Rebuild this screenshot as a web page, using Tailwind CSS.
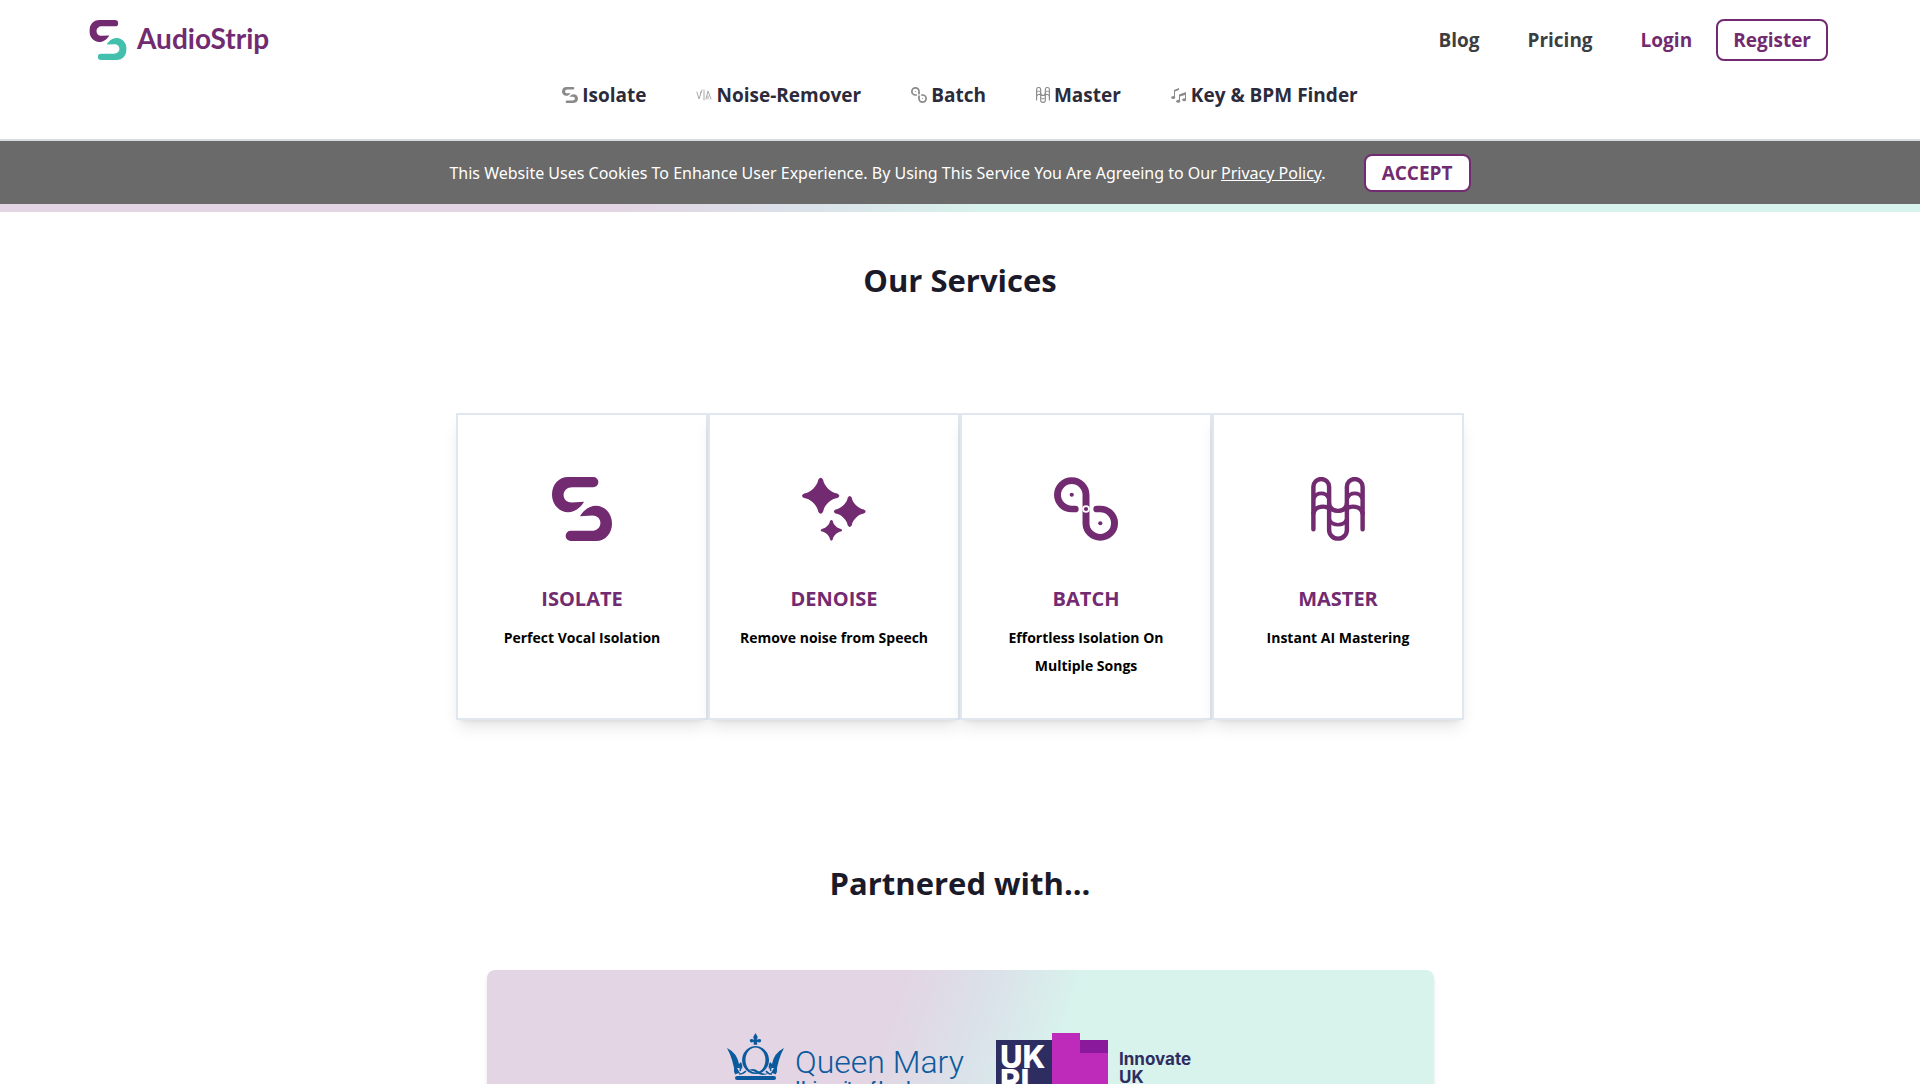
<!DOCTYPE html>
<html lang="en">
<head>
    <meta charset="UTF-8">
    <meta name="viewport" content="width=device-width, initial-scale=1.0">
    <title>AudioStrip</title>
    <!-- Tailwind CSS CDN -->
    <script src="https://cdn.jsdelivr.net/npm/@tailwindcss/browser@4"></script>
</head>
<body class="bg-white font-['Open_Sans','Noto_Sans',sans-serif] text-[#1a1a2a] overflow-x-hidden">

    <!-- Shared icon shapes -->
    <svg class="hidden" aria-hidden="true">
        <symbol id="strip-half" viewBox="0 0 176 189" preserveAspectRatio="none">
            <path d="M47 0H121a15 15 0 0 1 0 30H60C44 30 34 40 34 53C34 66 44 75 58 75L94 73C86 88 68 104 47 104C20 104 0 80 0 52C0 22 20 0 47 0Z"/>
        </symbol>
        <symbol id="icon-isolate" viewBox="0 0 176 189" preserveAspectRatio="none">
            <use href="#strip-half" width="176" height="189"/>
            <use href="#strip-half" width="176" height="189" transform="rotate(180 88 94.5)"/>
        </symbol>
        <symbol id="icon-batch" viewBox="0 0 184 190" preserveAspectRatio="none">
            <path d="M61 95H51A41 42 0 1 1 92 53V137A41 42 0 1 0 133 95H123" fill="none" stroke="currentColor" stroke-width="20" stroke-linecap="round"/>
            <circle cx="51" cy="53" r="6"/>
            <circle cx="133" cy="137" r="6"/>
            <circle cx="92" cy="95" r="11" fill="white"/>
            <circle cx="92" cy="95" r="6"/>
        </symbol>
        <symbol id="icon-master" viewBox="0 0 158 190" preserveAspectRatio="none">
            <g fill="none" stroke="currentColor" stroke-width="13" stroke-linecap="round">
                <path d="M7 155V29a23 23 0 0 1 46 0V157a26 26 0 0 0 52 0V29a23 23 0 0 1 46 0V155"/>
                <path d="M7 108C12 84 42 85 55 94Q79 107 103 94C116 85 146 84 151 108"/>
                <path d="M53 74a26 27 0 0 0 52 0M55 129C64 146 94 146 103 129M9 62C16 44 44 44 51 62M107 62C114 44 142 44 149 62" stroke-width="11"/>
            </g>
        </symbol>
        <symbol id="star" viewBox="-54 -54 108 108" overflow="visible">
            <path d="M-7 -48Q0 -60 7 -48C9 -30 30 -9 48 -7Q60 0 48 7C30 9 9 30 7 48Q0 60 -7 48C-9 30 -30 9 -48 7Q-60 0 -48 -7C-30 -9 -9 -30 -7 -48Z"/>
        </symbol>
    </svg>

    <header class="border-b-2 border-[#d5dde3]">
        <div class="flex items-center justify-between pl-[89px] pr-[92px] pt-[19px]">
            <a href="#" class="flex items-center gap-[10px] text-[#722b70]">
                <svg class="w-[38px] h-10" viewBox="0 0 176 189" fill="currentColor" aria-hidden="true">
                    <use href="#strip-half" width="176" height="189"/>
                    <use href="#strip-half" width="176" height="189" transform="rotate(180 88 94.5)" fill="#43bfae"/>
                </svg>
                <span class="pb-1 font-['Lato',sans-serif] font-bold text-[28px] leading-8">AudioStrip</span>
            </a>
            <nav class="flex items-center text-[19px] leading-6 font-bold text-[#3b3f42]">
                <a href="#" class="mr-12">Blog</a>
                <a href="#" class="mr-12">Pricing</a>
                <a href="#" class="mr-6 text-[#722b70]">Login</a>
                <a href="#" class="px-[15px] py-[7px] border-2 border-[#722b70] rounded-lg text-[#722b70]">Register</a>
            </nav>
        </div>

        <nav class="flex justify-center gap-[50px] pt-[22px] pb-8 text-[19px] leading-6 font-bold text-[#2b2b3b]">
            <a href="#" class="flex items-center gap-1">
                <svg class="w-4 h-4 text-[#8a8a8a]" fill="currentColor" aria-hidden="true"><use href="#icon-isolate"/></svg>
                Isolate
            </a>
            <a href="#" class="flex items-center gap-1">
                <svg class="w-4 h-4 text-[#aaaaaa]" viewBox="0 0 16 16" fill="none" stroke="currentColor" stroke-linecap="round" stroke-linejoin="round" aria-hidden="true">
                    <path d="M1 5l2 7 3-9M4.500 5v3M8 3v10M10 12l2-8 3 8M12 9v3"/>
                </svg>
                Noise-Remover
            </a>
            <a href="#" class="flex items-center gap-1">
                <svg class="w-4 h-4 text-[#8a8a8a]" fill="currentColor" aria-hidden="true"><use href="#icon-batch"/></svg>
                Batch
            </a>
            <a href="#" class="flex items-center gap-1">
                <svg class="w-[14px] h-4 text-[#8a8a8a]" fill="currentColor" aria-hidden="true"><use href="#icon-master"/></svg>
                Master
            </a>
            <a href="#" class="flex items-center gap-1">
                <svg class="w-4 h-4 text-[#8a8a8a]" viewBox="0 0 16 16" fill="currentColor" aria-hidden="true">
                    <path d="M3 10V3l5-2v2L4 4.500V10zM8 14V7.500L15 5v7.500h-1V8L9 9.500V14z"/>
                    <ellipse cx="2.200" cy="10.500" rx="2" ry="1.500"/>
                    <ellipse cx="7.200" cy="14.300" rx="2" ry="1.500"/>
                    <ellipse cx="13.200" cy="12.800" rx="2" ry="1.500"/>
                </svg>
                Key &amp; BPM Finder
            </a>
        </nav>
    </header>

    <!-- Cookie notice -->
    <div class="flex items-center justify-center gap-[38px] min-h-[63px] py-3 bg-[#6a6a6a] text-white">
        <p class="font-['Noto_Sans',sans-serif] text-base leading-6">This Website Uses Cookies To Enhance User Experience. By Using This Service You Are Agreeing to Our <a href="#" class="underline">Privacy Policy</a>.</p>
        <button type="button" class="px-4 py-[5px] bg-white border-2 border-[#722b70] rounded-lg text-[19px] leading-6 font-bold text-[#722b70]">ACCEPT</button>
    </div>
    <div class="h-2 bg-[linear-gradient(109deg,#e3d5e3_32%,#dbe0e9_41%,#d8f2ec_51%)]"></div>

    <main>
        <section class="pt-12">
            <h2 class="text-center text-[31px] leading-10 font-bold">Our Services</h2>
            <div class="grid grid-cols-4 max-w-[1008px] mx-auto mt-[113px] text-center font-bold">
                <a href="#" class="flex flex-col items-center min-h-[307px] pt-[62px] px-6 bg-white border-2 border-[#e0e7ef] shadow-lg">
                    <svg class="w-[60px] h-16 text-[#722b70]" fill="currentColor" aria-hidden="true"><use href="#icon-isolate"/></svg>
                    <h3 class="mt-11 text-xl leading-7 text-[#722b70]">ISOLATE</h3>
                    <p class="mt-[11px] text-sm leading-7 text-black">Perfect Vocal Isolation</p>
                </a>
                <a href="#" class="flex flex-col items-center min-h-[307px] pt-[62px] px-6 bg-white border-2 border-[#e0e7ef] shadow-lg">
                    <svg class="w-16 h-16 text-[#722b70]" viewBox="0 0 185 191" preserveAspectRatio="none" fill="currentColor" aria-hidden="true">
                        <use href="#star" width="108" height="108" x="0" y="2"/>
                        <use href="#star" width="92" height="92" x="92" y="57"/>
                        <use href="#star" width="62" height="62" x="54" y="128"/>
                    </svg>
                    <h3 class="mt-11 text-xl leading-7 text-[#722b70]">DENOISE</h3>
                    <p class="mt-[11px] text-sm leading-7 text-black">Remove noise from Speech</p>
                </a>
                <a href="#" class="flex flex-col items-center min-h-[307px] pt-[62px] px-6 bg-white border-2 border-[#e0e7ef] shadow-lg">
                    <svg class="w-16 h-16 text-[#722b70]" fill="currentColor" aria-hidden="true"><use href="#icon-batch"/></svg>
                    <h3 class="mt-11 text-xl leading-7 text-[#722b70]">BATCH</h3>
                    <p class="mt-[11px] text-sm leading-7 text-black">Effortless Isolation On<br>Multiple Songs</p>
                </a>
                <a href="#" class="flex flex-col items-center min-h-[307px] pt-[62px] px-6 bg-white border-2 border-[#e0e7ef] shadow-lg">
                    <svg class="w-[54px] h-16 text-[#722b70]" fill="currentColor" aria-hidden="true"><use href="#icon-master"/></svg>
                    <h3 class="mt-11 text-xl leading-7 text-[#722b70]">MASTER</h3>
                    <p class="mt-[11px] text-sm leading-7 text-black">Instant AI Mastering</p>
                </a>
            </div>
        </section>

        <section class="pt-[143px]">
            <h2 class="text-center text-[31px] leading-10 font-bold">Partnered with...</h2>
            <div class="flex justify-center items-start gap-8 max-w-[947px] mx-auto mt-[67px] pt-[63px] pb-16 rounded-lg shadow-md bg-[linear-gradient(109deg,#e3d5e3_395px,#dbe0e9_475px,#d8f2ec_565px)]">
                <!-- Queen Mary -->
                <svg class="w-[237px] h-[66px]" viewBox="0 0 237 66" fill="#0b5a9d" role="img" aria-label="Queen Mary University of London">
                    <path d="M28.500 0q1.500 2.500 2.200 4q-.5 2-1 3q3-2 4.500 0q0 2.500-2 2.500l-2-.8v3h-3.500v-3l-2 .8q-2 0-2-2.500q1.500-2 4.500 0q-.5-1-1-3z"/>
                    <path d="M28.500 13a13.500 14 0 1 0 .1 0zM28.500 14.500a10 12.500 0 1 1-.1 0z" fill-rule="evenodd"/>
                    <path d="M20 38Q26 34 31 38T42 40Q36 44 30 40T20 38z"/>
                    <path d="M0 15Q10 20 12 31l2-2q2 4 1 7q-3-4-5-1l3 5l-5 1Q6 26 0 15zM57 15Q47 20 45 31l-2-2q-2 4-1 7q3-4 5-1l-3 5l5 1Q51 26 57 15z"/>
                    <path d="M9 41Q6 36 10 34Q15 34 13 38M12 41Q16 41 19 38M48 41Q51 36 47 34Q42 34 44 38M45 41Q41 41 39 38" fill="none" stroke="#0b5a9d" stroke-width="1.500"/>
                    <rect x="8" y="43" width="41" height="4" rx="2"/>
                    <text x="68" y="40" font-family="Roboto" font-size="32" font-weight="300">Queen Mary</text>
                    <text x="69" y="59" font-family="Roboto" font-size="14" font-weight="700">University of London</text>
                </svg>
                <!-- UKRI / Innovate UK -->
                <svg class="w-[197px] h-[82px]" viewBox="0 0 197 82" role="img" aria-label="UKRI Innovate UK">
                    <rect y="7" width="57" height="75" fill="#2e2d62"/>
                    <path d="M56 0H84V20H112V82H56z" fill="#be2bbb"/>
                    <path d="M84 7H112V20H84z" fill="#8a1a9b"/>
                    <g fill="white" font-family="Inter" font-weight="800" font-size="31">
                        <text x="4" y="35">UK</text>
                        <text x="4" y="59">RI</text>
                    </g>
                    <g fill="#2e2d62" font-family="Inter" font-weight="700" font-size="17">
                        <text x="123" y="32">Innovate</text>
                        <text x="123" y="50">UK</text>
                    </g>
                </svg>
            </div>
        </section>
    </main>
</body>
</html>
